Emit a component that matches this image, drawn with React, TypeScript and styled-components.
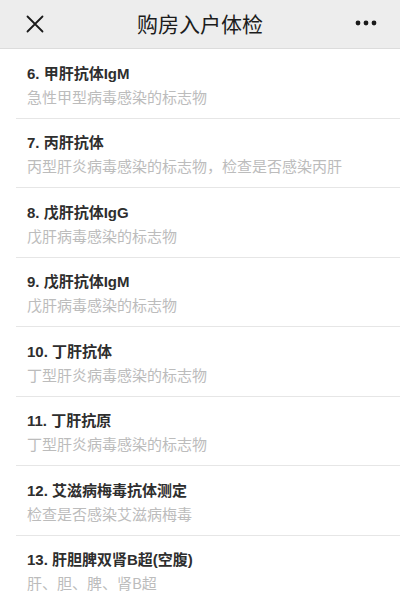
import React from "react";
import styled, { createGlobalStyle } from "styled-components";

const Global = createGlobalStyle`
  html, body { margin: 0; padding: 0; background: #ffffff; }
  body { font-family: "Liberation Sans", "Noto Sans CJK SC", sans-serif; }
  * { box-sizing: border-box; }
`;

const Page = styled.div`
  width: 400px;
  height: 591px;
  overflow: hidden;
  background: #ffffff;
  display: flex;
  flex-direction: column;
`;

const Header = styled.header`
  height: 49px;
  flex: 0 0 49px;
  background: #ededed;
  border-bottom: 1px solid #dcdcdc;
  display: grid;
  grid-template-columns: 60px 1fr 60px;
  align-items: center;
`;

const IconButton = styled.div<{ $align: "start" | "end" }>`
  display: flex;
  justify-content: ${(p) => (p.$align === "start" ? "flex-start" : "flex-end")};
  align-items: center;
  padding: ${(p) => (p.$align === "start" ? "0 0 1px 26px" : "0 23px 3px 0")};
`;

const Title = styled.h1`
  margin: 0;
  text-align: center;
  font-family: "Noto Sans CJK SC", sans-serif;
  font-size: 21px;
  font-weight: 400;
  color: #1c1c1c;
  line-height: 28px;
  padding-bottom: 2px;
`;

const List = styled.div`
  display: flex;
  flex-direction: column;
`;

const Row = styled.div`
  margin-left: 16px;
  padding: 13.5px 0 8.5px 11px;
  border-bottom: 1px solid #e6e6e6;
  display: flex;
  flex-direction: column;
`;

const ItemTitle = styled.div`
  font-family: "Liberation Sans", "Noto Sans CJK SC", sans-serif;
  font-size: 15px;
  font-weight: 700;
  color: #2e2e2e;
  line-height: 22px;
`;

const ItemDesc = styled.div`
  font-family: "Noto Sans CJK SC", sans-serif;
  font-size: 15px;
  font-weight: 400;
  color: #bcbcbc;
  line-height: 24.5px;
  white-space: nowrap;
`;

const items = [
  { t: "6. 甲肝抗体IgM", d: "急性甲型病毒感染的标志物" },
  { t: "7. 丙肝抗体", d: "丙型肝炎病毒感染的标志物，检查是否感染丙肝" },
  { t: "8. 戊肝抗体IgG", d: "戊肝病毒感染的标志物" },
  { t: "9. 戊肝抗体IgM", d: "戊肝病毒感染的标志物" },
  { t: "10. 丁肝抗体", d: "丁型肝炎病毒感染的标志物" },
  { t: "11. 丁肝抗原", d: "丁型肝炎病毒感染的标志物" },
  { t: "12. 艾滋病梅毒抗体测定", d: "检查是否感染艾滋病梅毒" },
  { t: "13. 肝胆脾双肾B超(空腹)", d: "肝、胆、脾、肾B超" },
];

export default function App() {
  return (
    <Page>
      <Global />
      <Header>
        <IconButton $align="start">
          <svg width="18" height="18" viewBox="0 0 18 18">
            <path d="M1.5 1.5 L16.5 16.5 M16.5 1.5 L1.5 16.5" stroke="#1a1a1a" strokeWidth="1.8" strokeLinecap="round" />
          </svg>
        </IconButton>
        <Title>购房入户体检</Title>
        <IconButton $align="end">
          <svg width="22" height="6" viewBox="0 0 22 6">
            <circle cx="3" cy="3" r="2.4" fill="#1a1a1a" />
            <circle cx="11" cy="3" r="2.4" fill="#1a1a1a" />
            <circle cx="19" cy="3" r="2.4" fill="#1a1a1a" />
          </svg>
        </IconButton>
      </Header>
      <List>
        {items.map((it) => (
          <Row key={it.t}>
            <ItemTitle>{it.t}</ItemTitle>
            <ItemDesc>{it.d}</ItemDesc>
          </Row>
        ))}
      </List>
    </Page>
  );
}
